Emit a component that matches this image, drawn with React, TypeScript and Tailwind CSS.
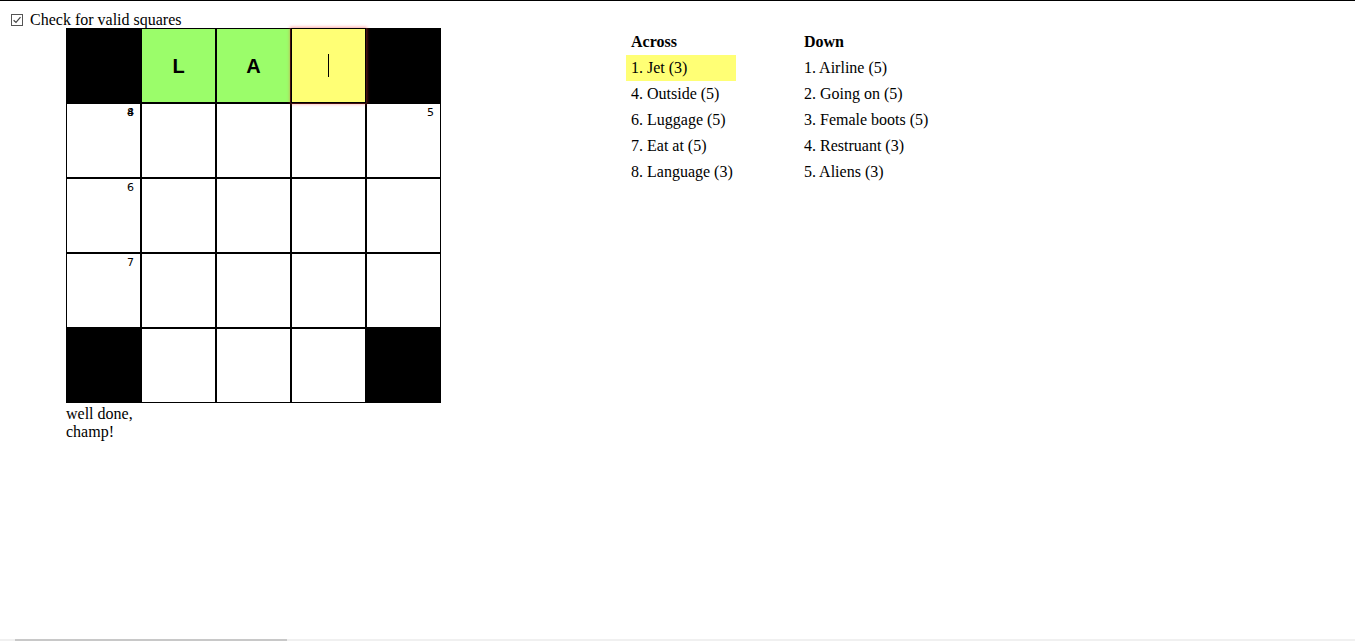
import React from "react";

type Cell = {
  kind: "block" | "open";
  letter?: string;
  state?: "valid" | "active";
  labels?: string[];
};

const B: Cell = { kind: "block" };
const O = (labels?: string[]): Cell => ({ kind: "open", labels });

const GRID: Cell[][] = [
  [B, { kind: "open", letter: "L", state: "valid" }, { kind: "open", letter: "A", state: "valid" }, { kind: "open", state: "active" }, B],
  [O(["4", "8"]), O(), O(), O(), O(["5"])],
  [O(["6"]), O(), O(), O(), O()],
  [O(["7"]), O(), O(), O(), O()],
  [B, O(), O(), O(), B],
];

const ACROSS = ["1. Jet (3)", "4. Outside (5)", "6. Luggage (5)", "7. Eat at (5)", "8. Language (3)"];
const DOWN = ["1. Airline (5)", "2. Going on (5)", "3. Female boots (5)", "4. Restruant (3)", "5. Aliens (3)"];

function Square({ cell }: { cell: Cell }) {
  if (cell.kind === "block") {
    return <div className="h-[75px] w-[75px] border border-black bg-black" />;
  }
  const bg =
    cell.state === "valid"
      ? "bg-[#9bfd6a]"
      : cell.state === "active"
        ? "bg-[#ffff75] relative z-10 shadow-[0_0_3px_1px_rgba(255,60,60,0.45)]"
        : "bg-white";
  return (
    <div className={`relative flex h-[75px] w-[75px] items-center justify-center border border-black ${bg}`}>
      {cell.labels?.map((l) => (
        <span
          key={l}
          className="absolute right-[6px] top-[2px] font-['DejaVu_Sans',sans-serif] text-[11px] leading-[14px] text-black"
        >
          {l}
        </span>
      ))}
      {cell.letter && (
        <span className="font-['Liberation_Sans',Arial,sans-serif] text-[20px] font-bold leading-none text-black">{cell.letter}</span>
      )}
      {cell.state === "active" && <span className="block h-[23px] w-px bg-black" />}
    </div>
  );
}

function ClueList({ title, clues, selected, wide }: { title: string; clues: string[]; selected?: number; wide?: boolean }) {
  return (
    <div className={wide ? "w-[173px]" : ""}>
      <div className="h-[26px] px-[5px] text-[16px] font-bold leading-[26px]">{title}</div>
      {clues.map((c, i) => (
        <div
          key={c}
          className={`h-[26px] px-[5px] text-[16px] leading-[26px] whitespace-nowrap ${wide ? "w-[110px]" : ""} ${i === selected ? "bg-[#ffff75]" : ""}`}
        >
          {c}
        </div>
      ))}
    </div>
  );
}

export default function App() {
  return (
    <div className="flex h-screen flex-col border-t border-black bg-white font-['Liberation_Serif','Times_New_Roman',serif] text-black">
      <label className="ml-[11px] mt-[11px] flex h-[16px] items-center gap-[7px] text-[16px] leading-[16px]">
        <span className="flex h-[12px] w-[12px] items-center justify-center border border-[#555] bg-white">
          <svg viewBox="0 0 10 10" className="h-[10px] w-[10px]">
            <path d="M1.6 5.2 L4 7.5 L8.5 2.2" fill="none" stroke="#444" strokeWidth="1.2" />
          </svg>
        </span>
        Check for valid squares
      </label>

      <div className="flex items-start">
        <div className="ml-[66px] w-[375px]">
          <div className="grid grid-cols-[repeat(5,75px)]">
            {GRID.flatMap((row, r) => row.map((cell, c) => <Square key={`${r}-${c}`} cell={cell} />))}
          </div>
          <div className="mt-[2px] w-[75px] text-[16px] leading-[18px]">well done, champ!</div>
        </div>

        <div className="ml-[185px] mt-px flex">
          <ClueList title="Across" clues={ACROSS} selected={0} wide />
          <ClueList title="Down" clues={DOWN} />
        </div>
      </div>

      <div className="mt-auto flex h-[2px] bg-[#f0f0f0]">
        <div className="ml-[15px] h-full w-[272px] bg-[#c8c8c8]" />
      </div>
    </div>
  );
}
